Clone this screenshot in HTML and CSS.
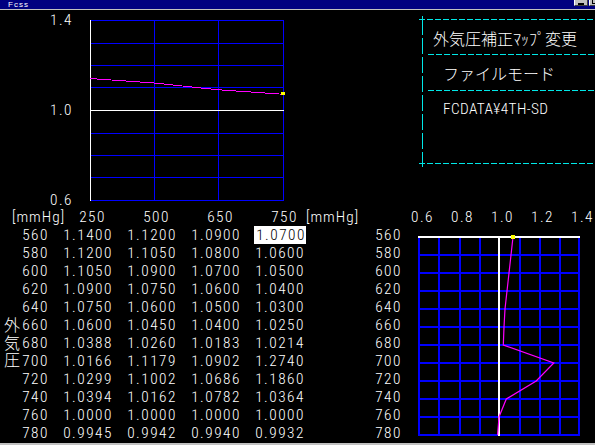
FILE: index.html
```html
<!DOCTYPE html>
<html lang="ja">
<head>
<meta charset="utf-8">
<title>Fcss</title>
<link rel="stylesheet" href="styles.css">
</head>
<body>
<div class="window">
  <div class="titlebar">
    <span class="title">Fcss</span>
    <div class="btns">
      <span class="btn btn-min"><i></i></span>
      <span class="btn btn-max"><i></i></span>
    </div>
  </div>
  <div class="client">
    <div class="top">
      <div class="yaxis"><span>1.4</span><span>1.0</span><span>0.6</span></div>
      <svg class="chart-top" width="196" height="184" viewBox="0 0 196 184" shape-rendering="crispEdges">
        <g stroke="#0000ff" stroke-width="1">
          <line x1="1" y1="1.5" x2="195" y2="1.5"/>
          <line x1="1" y1="24.5" x2="195" y2="24.5"/>
          <line x1="1" y1="46.5" x2="195" y2="46.5"/>
          <line x1="1" y1="68.5" x2="195" y2="68.5"/>
          <line x1="1" y1="114.5" x2="195" y2="114.5"/>
          <line x1="1" y1="136.5" x2="195" y2="136.5"/>
          <line x1="1" y1="158.5" x2="195" y2="158.5"/>
          <line x1="1" y1="181.5" x2="195" y2="181.5"/>
          <line x1="65.5" y1="1" x2="65.5" y2="182"/>
          <line x1="129.5" y1="1" x2="129.5" y2="182"/>
          <line x1="194.5" y1="1" x2="194.5" y2="182"/>
        </g>
        <g stroke="#ffffff" stroke-width="1">
          <line x1="1" y1="91.5" x2="195" y2="91.5"/>
          <line x1="1.5" y1="1" x2="1.5" y2="182"/>
        </g>
        <polyline points="1,59.5 65,64 129,70.75 194,75.25" fill="none" stroke="#ff00ff" stroke-width="1"/>
        <rect x="192" y="73" width="4" height="3" fill="#ffff00"/>
      </svg>
      <div class="panel">
        <div class="prow first">外気圧補正ﾏｯﾌﾟ変更</div>
        <div class="prow">ファイルモード</div>
        <div class="prow last">FCDATA¥4TH-SD</div>
      </div>
    </div>

    <div class="table">
      <div class="hunit">[mmHg]</div>
      <div class="hv">250</div>
      <div class="hv">500</div>
      <div class="hv">650</div>
      <div class="hv">750</div>
      <div class="hunit2">[mmHg]</div>
      <div class="axis"><span>0.6</span><span>0.8</span><span>1.0</span><span>1.2</span><span>1.4</span></div>

      <svg class="chart-side" width="192" height="216" viewBox="0 0 192 216">
        <g stroke="#0000ff" stroke-width="2">
          <line x1="15" y1="29" x2="177" y2="29"/>
          <line x1="15" y1="47" x2="177" y2="47"/>
          <line x1="15" y1="65" x2="177" y2="65"/>
          <line x1="15" y1="83" x2="177" y2="83"/>
          <line x1="15" y1="101" x2="177" y2="101"/>
          <line x1="15" y1="119" x2="177" y2="119"/>
          <line x1="15" y1="137" x2="177" y2="137"/>
          <line x1="15" y1="155" x2="177" y2="155"/>
          <line x1="15" y1="173" x2="177" y2="173"/>
          <line x1="15" y1="191" x2="177" y2="191"/>
          <line x1="15" y1="209" x2="177" y2="209"/>
          <line x1="16" y1="10" x2="16" y2="210"/>
          <line x1="36" y1="10" x2="36" y2="210"/>
          <line x1="57" y1="10" x2="57" y2="210"/>
          <line x1="77" y1="10" x2="77" y2="210"/>
          <line x1="117" y1="10" x2="117" y2="210"/>
          <line x1="137" y1="10" x2="137" y2="210"/>
          <line x1="157" y1="10" x2="157" y2="210"/>
          <line x1="176" y1="10" x2="176" y2="210"/>
        </g>
        <g stroke="#ffffff" stroke-width="2">
          <line x1="15" y1="11" x2="177" y2="11"/>
          <line x1="96" y1="10" x2="96" y2="210"/>
        </g>
        <polyline points="110,11 108,29 106,47 104,65 102,83 101,101 100.3,119 150.8,137 133.2,155 103.3,173 96,191 94.6,209" fill="none" stroke="#ff00ff" stroke-width="1.2"/>
        <rect x="108" y="9" width="4" height="4" fill="#ffff00"/>
      </svg>

      <div class="vk">外気圧</div>

      <div class="rl">560</div><div class="v">1.1400</div><div class="v">1.1200</div><div class="v">1.0900</div><div class="v hlcell"><span class="hl">1.0700</span></div><div class="rl2">560</div>
      <div class="rl">580</div><div class="v">1.1200</div><div class="v">1.1050</div><div class="v">1.0800</div><div class="v">1.0600</div><div class="rl2">580</div>
      <div class="rl">600</div><div class="v">1.1050</div><div class="v">1.0900</div><div class="v">1.0700</div><div class="v">1.0500</div><div class="rl2">600</div>
      <div class="rl">620</div><div class="v">1.0900</div><div class="v">1.0750</div><div class="v">1.0600</div><div class="v">1.0400</div><div class="rl2">620</div>
      <div class="rl">640</div><div class="v">1.0750</div><div class="v">1.0600</div><div class="v">1.0500</div><div class="v">1.0300</div><div class="rl2">640</div>
      <div class="rl">660</div><div class="v">1.0600</div><div class="v">1.0450</div><div class="v">1.0400</div><div class="v">1.0250</div><div class="rl2">660</div>
      <div class="rl">680</div><div class="v">1.0388</div><div class="v">1.0260</div><div class="v">1.0183</div><div class="v">1.0214</div><div class="rl2">680</div>
      <div class="rl">700</div><div class="v">1.0166</div><div class="v">1.1179</div><div class="v">1.0902</div><div class="v">1.2740</div><div class="rl2">700</div>
      <div class="rl">720</div><div class="v">1.0299</div><div class="v">1.1002</div><div class="v">1.0686</div><div class="v">1.1860</div><div class="rl2">720</div>
      <div class="rl">740</div><div class="v">1.0394</div><div class="v">1.0162</div><div class="v">1.0782</div><div class="v">1.0364</div><div class="rl2">740</div>
      <div class="rl">760</div><div class="v">1.0000</div><div class="v">1.0000</div><div class="v">1.0000</div><div class="v">1.0000</div><div class="rl2">760</div>
      <div class="rl">780</div><div class="v">0.9945</div><div class="v">0.9942</div><div class="v">0.9940</div><div class="v">0.9932</div><div class="rl2">780</div>
    </div>
  </div>
  <div class="statusbar"></div>
</div>
</body>
</html>
```
FILE: styles.css
```css
* {
  box-sizing: border-box;
  margin: 0;
  padding: 0;
}

html,
body {
  width: 595px;
  height: 445px;
  overflow: hidden;
  background: #000;
}

body {
  font-family: "Roboto Condensed", "Noto Sans CJK JP", sans-serif;
  font-weight: 300;
  font-size: 15.3px;
  color: #fff;
}

.window {
  display: flex;
  flex-direction: column;
  height: 445px;
}

/* title bar */
.titlebar {
  height: 10px;
  background: #000080;
  border-bottom: 1px solid #c0c0c0;
  display: flex;
  overflow: hidden;
  flex: none;
}

.title {
  font-family: "Liberation Sans", sans-serif;
  font-weight: 400;
  font-size: 8px;
  line-height: 9px;
  padding-left: 8px;
  letter-spacing: 1px;
  color: #fff;
}

.btns {
  margin-left: auto;
  margin-right: -8px;
  margin-top: -8px;
  display: flex;
  gap: 1px;
  align-self: flex-start;
}

.btn {
  width: 14px;
  height: 14px;
  background: #c0c0c0;
  border-top: 1px solid #fff;
  border-left: 1px solid #fff;
  border-right: 1px solid #404040;
  border-bottom: 1px solid #404040;
  display: block;
}

.btn-min i {
  display: block;
  width: 6px;
  height: 2px;
  background: #000;
  margin: 10px 0 0 3px;
}

.btn-max i {
  display: block;
  width: 9px;
  height: 8px;
  border: 1px solid #000;
  border-top-width: 2px;
  margin: 3px 0 0 2px;
}

/* client area */
.client {
  height: 433px;
  flex: none;
  background: #000;
  overflow: hidden;
}

.top {
  height: 198px;
  display: flex;
  align-items: flex-start;
}

.yaxis {
  width: 74px;
  height: 199px;
  padding-top: 1px;
  padding-right: 1px;
  display: flex;
  flex-direction: column;
  justify-content: space-between;
  align-items: flex-end;
  line-height: 18px;
  letter-spacing: 1.5px;
}

.chart-top {
  display: block;
  margin-left: 15px;
  margin-top: 9px;
  flex: none;
}

/* right info panel */
.panel {
  position: relative;
  margin-left: 134px;
  margin-top: 9px;
  width: 176px;
  height: 145px;
  flex: none;
  padding-top: 1px;
  font-family: "Noto Sans CJK JP", sans-serif;
  font-size: 16px;
  background-image:
    repeating-linear-gradient(to right, #00e8e8 0 6px, transparent 6px 8px),
    repeating-linear-gradient(to right, #00e8e8 0 6px, transparent 6px 8px),
    repeating-linear-gradient(to bottom, #00e8e8 0 16px, transparent 16px 19px);
  background-size: 100% 1px, 100% 1px, 1px 100%;
  background-position: 0 0, 0 100%, 3px 0;
  background-repeat: no-repeat;
}

.panel::before,
.panel::after {
  content: "";
  position: absolute;
  left: 3px;
  width: 1px;
  height: 7px;
  background: #00e8e8;
}

.panel::before {
  top: -3px;
}

.panel::after {
  bottom: -3px;
}

.prow {
  height: 36px;
  line-height: 36px;
  padding-left: 24px;
  white-space: nowrap;
  background-image: repeating-linear-gradient(to right, #00e8e8 0 6px, transparent 6px 8px);
  background-size: calc(100% - 9px) 1px;
  background-position: 9px 100%;
  background-repeat: no-repeat;
}

.prow.first {
  height: 35px;
  padding-left: 14px;
}

.prow.last {
  background: none;
  font-family: "Roboto Condensed", sans-serif;
  font-size: 15.3px;
  letter-spacing: 0.4px;
}

/* table */
.table {
  display: grid;
  grid-template-columns: 20px 30px 64px 64px 64px 64px 97px 192px;
  grid-auto-rows: 18px;
  line-height: 18px;
  letter-spacing: 1.5px;
  white-space: nowrap;
}

.hunit {
  grid-column: span 2;
  padding-left: 12px;
  letter-spacing: 1px;
}

.hv {
  text-align: right;
  padding-right: 8px;
}

.hunit2 {
  padding-left: 0;
  letter-spacing: 1px;
}

.axis {
  display: flex;
  padding-left: 8px;
}

.axis span {
  width: 40px;
  flex: none;
}

.chart-side {
  grid-column: 8;
  grid-row: 2 / span 12;
  display: block;
}

.vk {
  grid-column: 1;
  grid-row: 7 / span 3;
  writing-mode: vertical-rl;
  font-family: "Noto Sans CJK JP", sans-serif;
  font-size: 16px;
  line-height: 23px;
  letter-spacing: 1.6px;
  padding-top: 1px;
  justify-self: start;
}

.rl {
  grid-column: 2;
}

.rl,
.rl2,
.v {
  text-align: right;
  padding-right: 1px;
}

.v.hlcell {
  padding-right: 0;
}

.hl {
  display: inline-block;
  height: 18px;
  background: #fff;
  color: #000;
  padding: 0 0 0 2px;
}

.statusbar {
  flex: 1;
  background: #c0c0c0;
}
```
